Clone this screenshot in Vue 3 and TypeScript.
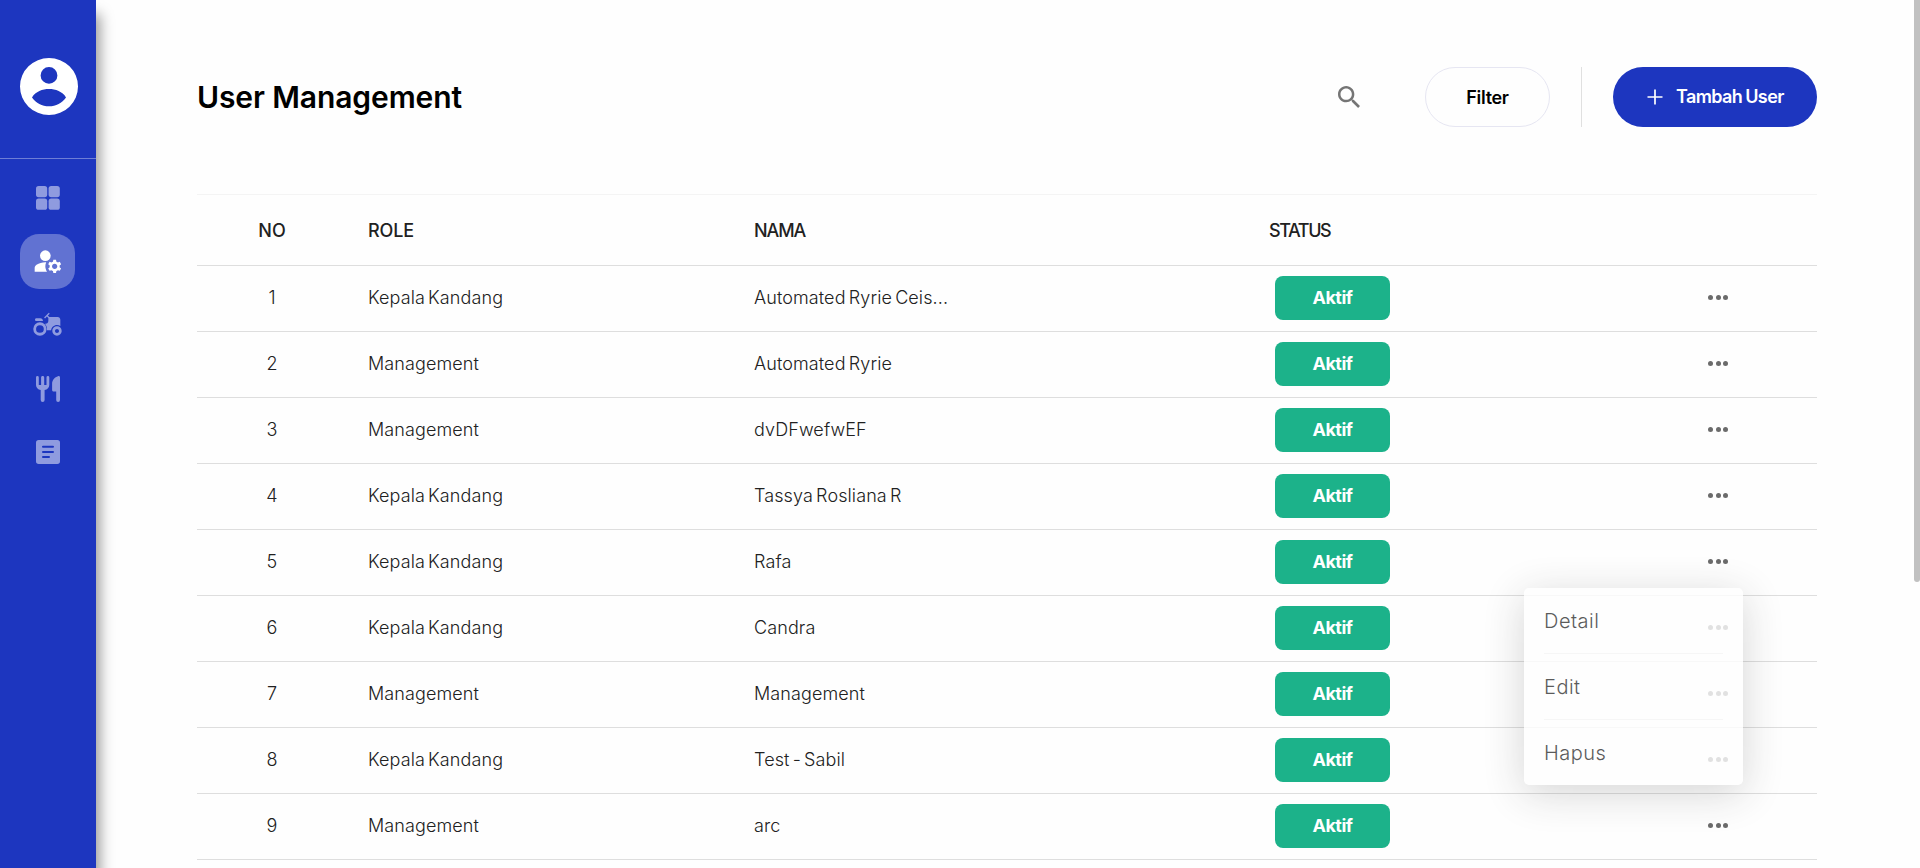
<script setup lang="ts">
import { ref } from 'vue'

interface User {
  role: string
  name: string
}

const users: User[] = [
  { role: 'Kepala Kandang', name: 'Automated Ryrie Ceis...' },
  { role: 'Management', name: 'Automated Ryrie' },
  { role: 'Management', name: 'dvDFwefwEF' },
  { role: 'Kepala Kandang', name: 'Tassya Rosliana R' },
  { role: 'Kepala Kandang', name: 'Rafa' },
  { role: 'Kepala Kandang', name: 'Candra' },
  { role: 'Management', name: 'Management' },
  { role: 'Kepala Kandang', name: 'Test - Sabil' },
  { role: 'Management', name: 'arc' },
]

const actions: string[] = ['Detail', 'Edit', 'Hapus']
const openRow = ref<number | null>(4)

function toggle(i: number): void {
  openRow.value = openRow.value === i ? null : i
}
</script>

<template>
  <div class="layout">
    <aside class="sidebar">
      <div class="profile">
        <svg class="avatar" viewBox="0 0 58 57">
          <path
            fill="#fff"
            fill-rule="evenodd"
            d="M29 0a29 28.5 0 1 0 0 57a29 28.5 0 1 0 0-57zM29 9a8.4 8.4 0 1 1 0 16.8a8.4 8.4 0 1 1 0-16.8zM12 39.4C15.5 33.5 22.5 31 29 31s13.5 2.5 17 8.4C42 45 36 48.3 29 48.3S16 45 12 39.4z"
          />
        </svg>
      </div>
      <nav class="nav">
        <a class="nav-item">
          <svg class="icon-grid" viewBox="0 0 24 24">
            <rect x="0" y="0" width="11.2" height="11.2" rx="2.6" />
            <rect x="12.6" y="0" width="11.2" height="11.2" rx="2.6" />
            <rect x="0" y="12.6" width="11.2" height="11.2" rx="2.6" />
            <rect x="12.6" y="12.6" width="11.2" height="11.2" rx="2.6" />
          </svg>
        </a>
        <a class="nav-item active">
          <svg class="icon-users" viewBox="0 0 24 24">
            <circle cx="10" cy="8" r="4" />
            <path d="M10.67 13.02c-.22-.01-.44-.02-.67-.02-2.42 0-4.68.67-6.61 1.82-.88.52-1.39 1.5-1.39 2.53V20h9.26c-.79-1.13-1.26-2.51-1.26-4 0-1.07.25-2.07.67-2.98z" />
            <path d="M20.75 16c0-.22-.03-.42-.06-.63l1.14-1.01-1-1.73-1.45.49c-.32-.27-.68-.48-1.08-.63L18 11h-2l-.3 1.49c-.4.15-.76.36-1.08.63l-1.45-.49-1 1.73 1.14 1.01c-.03.21-.06.41-.06.63s.03.42.06.63l-1.14 1.01 1 1.73 1.45-.49c.32.27.68.48 1.08.63L16 21h2l.3-1.49c.4-.15.76-.36 1.08-.63l1.45.49 1-1.73-1.14-1.01c.03-.21.06-.41.06-.63zM17 18c-1.1 0-2-.9-2-2s.9-2 2-2 2 .9 2 2-.9 2-2 2z" />
          </svg>
        </a>
        <a class="nav-item">
          <svg class="icon-tractor" viewBox="0 0 24 24">
            <path d="M19.5 12c.93 0 1.78.28 2.5.76V8c0-1.1-.9-2-2-2h-6.29l-1.06-1.06 1.41-1.41-.71-.71-3.53 3.53.71.71 1.41-1.41L13 6.71V9c0 1.1-.9 2-2 2h-.54c.95 1.06 1.54 2.46 1.54 4 0 .34-.04.67-.09 1h3.14c.25-2.25 2.14-4 4.45-4z" />
            <path d="M19.5 13c-1.93 0-3.5 1.57-3.5 3.5s1.57 3.5 3.5 3.5 3.5-1.57 3.5-3.5-1.57-3.5-3.5-3.5zm0 5c-.83 0-1.5-.67-1.5-1.5s.67-1.5 1.5-1.5 1.5.67 1.5 1.5-.67 1.5-1.5 1.5z" />
            <path d="M4 9h5c0-1.1-.9-2-2-2H4c-.55 0-1 .45-1 1s.45 1 1 1z" />
            <path d="M6.7 10a5 5 0 1 0 0 10a5 5 0 1 0 0-10zm0 2.1a2.9 2.9 0 1 1 0 5.8a2.9 2.9 0 1 1 0-5.8z" />
          </svg>
        </a>
        <a class="nav-item">
          <svg class="icon-food" viewBox="0 0 24 26">
            <path d="M0 1.5a1.4 1.4 0 0 1 2.8 0V9h2.3V1.5a1.55 1.55 0 0 1 3.1 0V9h2.3V1.5a1.4 1.4 0 0 1 2.8 0V9c0 2.7-1.9 4.6-4.7 5v10a1.95 1.95 0 0 1-3.9 0V14C1.900 13.600 0 11.700 0 9z" />
            <path d="M22 .2c1.2-.4 2 .3 2 1.400V24a1.900 1.900 0 0 1-3.800 0v-8.500h-2.600c-.9 0-1.500-.6-1.500-1.500V8c0-4 2.700-7 5.900-7.800z" />
          </svg>
        </a>
        <a class="nav-item">
          <svg class="icon-article" viewBox="0 0 24 24">
            <path
              fill-rule="evenodd"
              d="M2.7 0h18.6A2.7 2.7 0 0 1 24 2.7v18.6a2.7 2.7 0 0 1-2.7 2.7H2.7A2.7 2.7 0 0 1 0 21.3V2.7A2.7 2.7 0 0 1 2.7 0zM7 5.7a1 1 0 0 0 0 2h10a1 1 0 0 0 0-2zM7 10.9a1 1 0 0 0 0 2h10a1 1 0 0 0 0-2zM7 16a1 1 0 0 0 0 2h6a1 1 0 0 0 0-2z"
            />
          </svg>
        </a>
      </nav>
    </aside>

    <main class="content">
      <header class="topbar">
        <h1 class="title">User Management</h1>
        <div class="tools">
          <button class="search" aria-label="Search">
            <svg viewBox="3 3 17.5 17.5">
              <path d="M15.5 14h-.79l-.28-.27C15.41 12.59 16 11.11 16 9.5 16 5.91 13.09 3 9.5 3S3 5.91 3 9.5 5.91 16 9.5 16c1.61 0 3.09-.59 4.23-1.57l.27.28v.79l5 4.99L20.49 19l-4.99-5zm-6 0C7.01 14 5 11.99 5 9.5S7.01 5 9.5 5 14 7.01 14 9.5 11.99 14 9.5 14z" />
            </svg>
          </button>
          <button class="filter">Filter</button>
          <span class="separator"></span>
          <button class="add">
            <svg viewBox="0 0 16 16"><path d="M8 .5v15M.5 8h15" /></svg>
            <span>Tambah User</span>
          </button>
        </div>
      </header>

      <section class="table">
        <div class="row head">
          <span class="no">NO</span>
          <span class="head-role">ROLE</span>
          <span class="head-name">NAMA</span>
          <span class="head-status">STATUS</span>
        </div>
        <div v-for="(user, i) in users" :key="i" class="row">
          <span class="no">{{ i + 1 }}</span>
          <span>{{ user.role }}</span>
          <span>{{ user.name }}</span>
          <span class="chip">Aktif</span>
          <div class="more">
            <button class="dots" aria-label="Actions" @click="toggle(i)"><i></i><i></i><i></i></button>
            <ul v-if="openRow === i" class="menu">
              <li v-for="action in actions" :key="action">{{ action }}</li>
            </ul>
          </div>
        </div>
      </section>
    </main>
    <div class="scrollbar"></div>
  </div>
</template>

<style>
body {
  overflow: hidden;
  background: #fff;
}
</style>

<style scoped>
* {
  box-sizing: border-box;
}

.layout {
  position: relative;
  display: flex;
  height: 868px;
  overflow: hidden;
  background: #fefefe;
  color: #212121;
  font-family: Inter, 'Open Sans', sans-serif;
  font-size: 18px;
}

button {
  margin: 0;
  padding: 0;
  border: 0;
  background: none;
  font: inherit;
}

svg {
  display: block;
}

.sidebar {
  flex: none;
  width: 96px;
  background: #1d36bf;
  box-shadow: 4px 14px 13px rgba(0, 0, 0, 0.4);
}

.profile {
  height: 159px;
  padding: 58px 0 0 20px;
  border-bottom: 1px solid rgba(255, 255, 255, 0.36);
}

.avatar {
  width: 58px;
  height: 57px;
}

.nav {
  display: flex;
  flex-direction: column;
  align-items: center;
  gap: 8.7px;
  padding: 11px 1px 0 0;
}

.nav-item {
  display: flex;
  align-items: center;
  justify-content: center;
  width: 55px;
  height: 55px;
  border-radius: 19px;
}

.nav-item svg {
  fill: #8f9bdf;
}

.nav-item.active {
  background: #6172d2;
}

.nav-item.active svg {
  fill: #fff;
}

.icon-grid,
.icon-article {
  width: 24px;
  height: 24px;
  margin-left: 1px;
}

.icon-users {
  width: 32px;
  height: 32px;
}

.icon-tractor {
  width: 32px;
  height: 32px;
  margin-right: 1px;
}

.icon-food {
  width: 24px;
  height: 26px;
  margin-left: 1px;
}

.content {
  flex: 1;
  padding: 67px 103px 0 101px;
}

.topbar {
  display: flex;
  align-items: center;
  justify-content: space-between;
  height: 60px;
}

.title {
  margin: 0;
  color: #000;
  font-size: 30px;
  font-weight: 600;
  letter-spacing: -0.1px;
}

.tools {
  display: flex;
  align-items: center;
  height: 60px;
}

.search {
  width: 22px;
  height: 22px;
  margin-right: 65px;
}

.search svg {
  width: 22px;
  height: 22px;
  fill: #757575;
}

.filter {
  width: 125px;
  height: 60px;
  border: 1px solid #e6e6f2;
  border-radius: 30px;
  color: #000;
  font-weight: 600;
  letter-spacing: -0.3px;
}

.separator {
  width: 1px;
  height: 60px;
  margin: 0 31px;
  background: #e0e0e0;
}

.add {
  display: flex;
  align-items: center;
  gap: 13px;
  width: 204px;
  height: 60px;
  padding: 0 0 1px 34px;
  border-radius: 30px;
  background: #1d36bf;
  color: #fff;
  font-weight: 600;
  letter-spacing: -0.6px;
  word-spacing: -1px;
  white-space: nowrap;
}

.add svg {
  width: 16px;
  height: 16px;
  fill: none;
  stroke: #fff;
  stroke-width: 1.7;
}

.table {
  margin-top: 67px;
  border-top: 1px solid #f4f4f4;
}

.row {
  display: grid;
  grid-template-columns: 149px 386px 515px 1fr 132px;
  align-items: center;
  height: 66px;
  padding: 0 0 2px 22px;
  border-bottom: 1px solid #dedede;
  font-weight: 300;
  letter-spacing: 0.1px;
  word-spacing: -2px;
}

.head {
  height: 71px;
  padding-bottom: 0;
  font-weight: 500;
}

.head-role {
  letter-spacing: -0.1px;
}

.head-name {
  letter-spacing: -1.1px;
}

.head-status {
  letter-spacing: -1.4px;
}

.no {
  width: 106px;
  text-align: center;
}

.chip {
  display: flex;
  align-items: center;
  justify-content: center;
  width: 115px;
  height: 44px;
  margin-left: 6px;
  border-radius: 8px;
  background: #1cb28a;
  color: #fff;
  font-weight: 700;
  letter-spacing: -0.5px;
}

.more {
  position: relative;
  padding-left: 23px;
}

.dots {
  display: flex;
  gap: 2.5px;
  padding: 8px 0;
}

.dots i {
  width: 5px;
  height: 5px;
  border-radius: 50%;
  background: #6b6b6b;
}

.menu {
  position: absolute;
  z-index: 2;
  top: 37px;
  right: 74px;
  width: 219px;
  height: 197px;
  margin: 0;
  padding: 0 20px;
  border-radius: 5px;
  background: #fff;
  box-shadow: 0 8px 40px rgba(0, 0, 0, 0.2);
  opacity: 0.8;
  color: #333;
  font-size: 20px;
  letter-spacing: 0.5px;
  list-style: none;
}

.menu li {
  height: 66px;
  padding-top: 21px;
  border-bottom: 1px solid #f5f5f5;
  line-height: 25px;
}

.menu li:last-child {
  border-bottom: 0;
}

.scrollbar {
  position: absolute;
  top: 0;
  right: 0;
  width: 6px;
  height: 582px;
  border-radius: 0 0 3px 3px;
  background: #c1c1c1;
}
</style>
